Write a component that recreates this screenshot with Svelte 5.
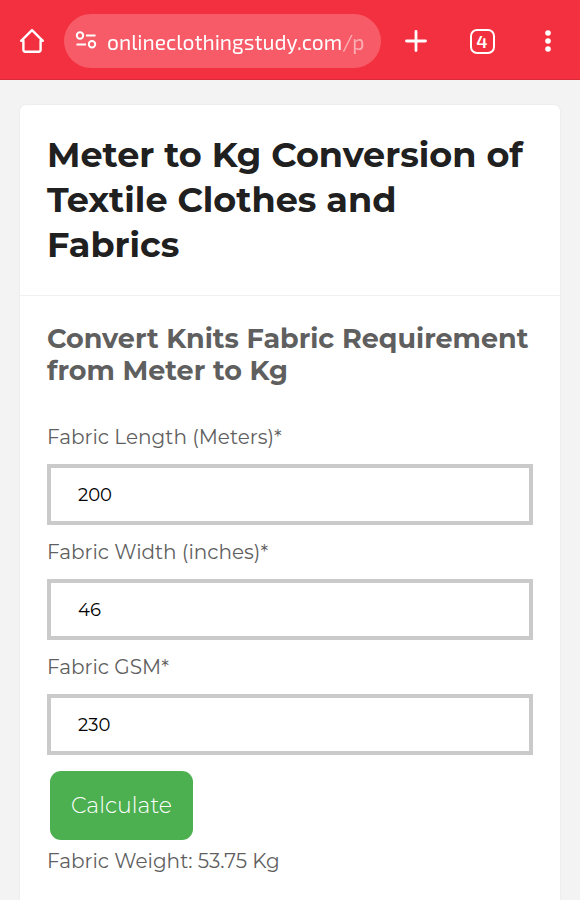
<script>
	let address = $state("onlineclothingstudy.com/p")
	let tabCount = $state(4)

	let fields = $state([
		{ id: "length", label: "Fabric Length (Meters)*", value: "200" },
		{ id: "width", label: "Fabric Width (inches)*", value: "46" },
		{ id: "gsm", label: "Fabric GSM*", value: "230" },
	])

	// width comes in inches, gsm is grams per square meter
	const getWeight = () => {
		const [length, width, gsm] = fields.map(field => Number(field.value))
		return ((length * width * 0.0254 * gsm) / 1000).toFixed(2)
	}

	let weight = $state(getWeight())

	const handleSubmit = event => {
		event.preventDefault()
		weight = getWeight()
	}
</script>

<header class="toolbar">
	<button class="icon-btn" aria-label="Home">
		<svg width="26" height="26" viewBox="0 0 26 26" fill="none" stroke="currentColor" stroke-width="2.4" stroke-linecap="round" stroke-linejoin="round">
			<path d="M2.2 12.8 13 2.2l10.8 10.6M2.2 12.8h2.2V22a1.8 1.8 0 0 0 1.8 1.8h13.6a1.8 1.8 0 0 0 1.8-1.8v-9.2h2.2" />
		</svg>
	</button>

	<div class="address">
		<button class="site-btn" aria-label="Site information">
			<svg width="22" height="20" viewBox="0 0 22 20" fill="none" stroke="currentColor" stroke-width="2">
				<circle cx="5" cy="4.5" r="3.2" />
				<path d="M11 4.5h9.5M1.5 13.5h9.5" />
				<circle cx="17" cy="13.2" r="3.2" />
			</svg>
		</button>
		<input type="text" aria-label="Address" bind:value={address} />
	</div>

	<div class="actions">
		<button class="icon-btn" aria-label="New tab">
			<svg width="22" height="22" viewBox="0 0 22 22" fill="none" stroke="currentColor" stroke-width="2.8" stroke-linecap="round">
				<path d="M11 1.5v19M1.5 11h19" />
			</svg>
		</button>
		<button class="icon-btn" aria-label="Tabs">
			<span class="tab-count">{tabCount}</span>
		</button>
		<button class="icon-btn" aria-label="Menu">
			<svg width="6" height="22" viewBox="0 0 6 22" fill="currentColor">
				<circle cx="3" cy="3" r="2.8" />
				<circle cx="3" cy="11" r="2.8" />
				<circle cx="3" cy="19" r="2.8" />
			</svg>
		</button>
	</div>
</header>

<main>
	<article>
		<h1>Meter to Kg Conversion of Textile Clothes and Fabrics</h1>

		<section>
			<h2>Convert Knits Fabric Requirement from Meter to Kg</h2>

			<form onsubmit={handleSubmit}>
				{#each fields as field (field.id)}
					<label for={field.id}>{field.label}</label>
					<input id={field.id} type="text" inputmode="decimal" bind:value={field.value} />
				{/each}
				<button type="submit">Calculate</button>
			</form>

			<p class="result">Fabric Weight: {weight} Kg</p>
		</section>
	</article>
</main>

<style>
	:global(body) {
		margin: 0;
		background: #f3f3f3;
		font-family: Montserrat, Inter, sans-serif;
		color: #5f5f5f;
	}

	button,
	input {
		box-sizing: border-box;
		margin: 0;
		font: inherit;
	}

	.toolbar {
		display: flex;
		align-items: center;
		height: 80px;
		box-sizing: border-box;
		padding: 3px 0 0;
		background: #f3303f;
		border-bottom: 1px solid #d92b39;
		color: #fff;
	}

	.icon-btn {
		display: flex;
		flex: none;
		align-items: center;
		justify-content: center;
		width: 64px;
		height: 54px;
		padding: 0;
		border: 0;
		background: none;
		color: inherit;
	}

	.actions {
		display: flex;
		gap: 2px;
	}

	.address {
		display: flex;
		flex: 1;
		align-items: center;
		gap: 10px;
		min-width: 0;
		height: 54px;
		box-sizing: border-box;
		margin-right: 3px;
		padding: 0 10px 0 11px;
		border-radius: 27px;
		background: #f65b67;
	}

	.site-btn {
		display: flex;
		flex: none;
		padding: 0;
		border: 0;
		background: none;
		color: inherit;
	}

	.address input {
		flex: 1;
		min-width: 0;
		height: 40px;
		padding: 0;
		border: 0;
		background: none;
		color: #fff;
		font-family: "Exo 2", "Noto Sans", sans-serif;
		font-size: 21px;
		mask-image: linear-gradient(to right, #000 calc(100% - 29px), rgb(0 0 0 / 0.5) calc(100% - 29px));
	}

	.tab-count {
		display: flex;
		align-items: center;
		justify-content: center;
		width: 25px;
		height: 25px;
		box-sizing: border-box;
		border: 2px solid;
		border-radius: 7px;
		font-family: "Exo 2", "Noto Sans", sans-serif;
		font-size: 18px;
		font-weight: 600;
		line-height: 20px;
	}

	main {
		padding: 25px 20px 0;
	}

	article {
		min-height: 820px;
		border-radius: 6px;
		background: #fff;
		box-shadow: 0 0 2px rgb(0 0 0 / 0.08);
	}

	h1 {
		margin: 0;
		padding: 27px 27px 28px;
		border-bottom: 1px solid #f0f0f0;
		color: #202020;
		font-size: 35px;
		font-weight: 700;
		line-height: 45px;
	}

	section {
		padding: 27px;
	}

	h2 {
		margin: 0 0 23px;
		font-size: 27px;
		font-weight: 700;
		line-height: 32px;
	}

	label {
		display: block;
		font-size: 20px;
		font-weight: 400;
		line-height: 54px;
	}

	form input {
		display: block;
		width: 100%;
		height: 61px;
		padding: 0 27px;
		border: 4px solid #cacaca;
		border-radius: 0;
		background: #fff;
		color: #000;
		font-size: 18px;
	}

	form button {
		display: block;
		height: 69px;
		margin: 16px 3px 0;
		padding: 0 21px;
		border: 0;
		border-radius: 11px;
		background: #4caf50;
		color: #fff;
		font-size: 22px;
		font-weight: 300;
	}

	.result {
		margin: 0;
		font-size: 20px;
		font-weight: 400;
		line-height: 42px;
	}
</style>
